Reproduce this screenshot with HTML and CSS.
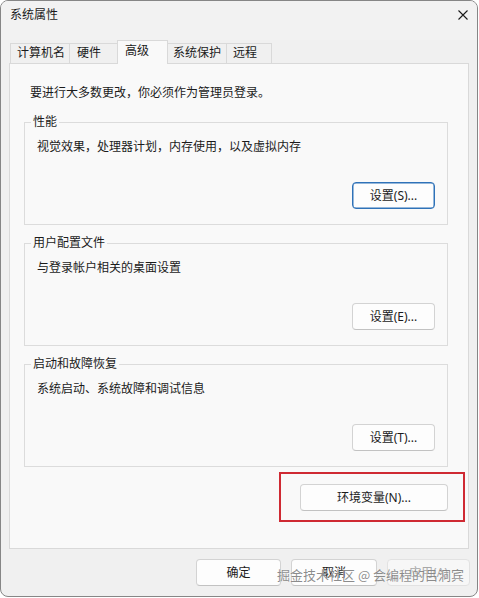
FILE: index.html
```html
<!DOCTYPE html>
<html lang="zh-CN">
<head>
<meta charset="utf-8">
<title>系统属性</title>
<link rel="stylesheet" href="styles.css">
</head>
<body>
<div class="window">
  <div class="titlebar">
    <span class="title">系统属性</span>
    <span class="close" aria-label="关闭">
      <svg width="10" height="10" viewBox="0 0 10 10"><path d="M0.5 0.5 L9.5 9.5 M9.5 0.5 L0.5 9.5" stroke="#1a1a1a" stroke-width="1.1" fill="none"/></svg>
    </span>
  </div>
  <div class="tabs">
    <div class="tab">计算机名</div>
    <div class="tab">硬件</div>
    <div class="tab active">高级</div>
    <div class="tab">系统保护</div>
    <div class="tab">远程</div>
  </div>
  <div class="panel">
    <p class="intro">要进行大多数更改，你必须作为管理员登录。</p>
    <fieldset class="group">
      <legend>性能</legend>
      <p class="desc">视觉效果，处理器计划，内存使用，以及虚拟内存</p>
      <div class="actions"><button class="btn btn-set btn-default">设置(S)...</button></div>
    </fieldset>
    <fieldset class="group">
      <legend>用户配置文件</legend>
      <p class="desc">与登录帐户相关的桌面设置</p>
      <div class="actions"><button class="btn btn-set">设置(E)...</button></div>
    </fieldset>
    <fieldset class="group">
      <legend>启动和故障恢复</legend>
      <p class="desc">系统启动、系统故障和调试信息</p>
      <div class="actions"><button class="btn btn-set">设置(T)...</button></div>
    </fieldset>
    <div class="env-row">
      <div class="highlight"><button class="btn btn-env">环境变量(N)...</button></div>
    </div>
  </div>
  <div class="footer">
    <button class="btn btn-ok">确定</button>
    <button class="btn btn-cancel">取消</button>
    <button class="btn btn-apply" disabled>应用(A)</button>
  </div>
  <div class="watermark">掘金技术社区 @ 会编程的吕洞宾</div>
</div>
</body>
</html>
```
FILE: styles.css
```css
* { box-sizing: border-box; }
html, body { margin: 0; padding: 0; background: #ffffff; }
body {
  font-family: "Segoe UI", "Noto Sans", "Noto Sans CJK SC", sans-serif;
  font-size: 12px;
  color: #1b1b1b;
}
.window {
  position: relative;
  width: 478px;
  height: 597px;
  border: 1px solid #868686;
  border-radius: 8px;
  background: #f0f0f0;
  display: flex;
  flex-direction: column;
  overflow: hidden;
}
.titlebar {
  height: 39px;
  flex: none;
  display: flex;
  justify-content: space-between;
  align-items: flex-start;
  background: #f2f2f2;
}
.title {
  padding: 6px 0 0 9px;
  line-height: 16px;
  font-size: 12px;
}
.close {
  display: block;
  margin: 9px 9px 0 0;
  width: 10px;
  height: 10px;
}
.close svg { display: block; }
.tabs {
  height: 23px;
  flex: none;
  display: flex;
  align-items: flex-end;
  padding-left: 9px;
  position: relative;
  z-index: 1;
}
.tab {
  height: 20px;
  border: 1px solid #d9d9d9;
  border-bottom: none;
  background: #f0f0f0;
  padding: 1px 0 0 6px;
  line-height: 16px;
  white-space: nowrap;
}
.tab + .tab { margin-left: -1px; }
.tab:nth-child(1) { width: 60px; }
.tab:nth-child(2) { width: 49px; padding-left: 7px; }
.tab:nth-child(3) { width: 51px; padding-left: 7px; }
.tab:nth-child(4) { width: 60px; padding-left: 5px; }
.tab:nth-child(5) { width: 46px; padding-left: 6px; }
.tab.active {
  height: 24px;
  margin-bottom: -1px;
  background: #f9f9f9;
  padding-top: 2px;
  position: relative;
  z-index: 2;
}
.panel {
  flex: 1;
  margin: 0 8px;
  border: 1px solid #d9d9d9;
  background: #f9f9f9;
  padding: 21px 3px 0 14px;
  display: flex;
  flex-direction: column;
}
.intro {
  margin: 0 0 13px 0;
  padding-left: 6px;
  line-height: 16px;
}
.group {
  margin: 0 17px 0 0;
  border: 1px solid #dcdcdc;
  padding: 9px 12px 15px 12px;
  min-width: 0;
}
.group + .group { margin-top: 10px; }
.group legend {
  margin-left: -6px;
  padding: 0 2px;
  line-height: 16px;
}
.desc {
  margin: 0;
  line-height: 16px;
}
.actions {
  margin-top: 27px;
  display: flex;
  justify-content: flex-end;
}
.btn {
  font: inherit;
  color: #1b1b1b;
  height: 27px;
  border: 1px solid #d3d3d3;
  border-bottom-color: #c2c2c2;
  border-radius: 4px;
  background: #fdfdfd;
  padding: 0;
  line-height: 16px;
  display: flex;
  align-items: center;
  justify-content: center;
}
.btn-default {
  border-color: #2f72b8;
  box-shadow: inset 0 0 0 0.5px #2f72b8;
}
.btn-set { width: 83px; }
.env-row {
  margin-top: 5px;
  display: flex;
  justify-content: flex-end;
}
.highlight {
  border: 2px solid #cf2a33;
  padding: 10px 15px 9px 19px;
}
.btn-env { width: 148px; }
.footer {
  height: 47px;
  flex: none;
  display: flex;
  justify-content: flex-end;
  align-items: flex-start;
  gap: 10px;
  padding: 10px 7px 0 0;
}
.btn-ok { width: 85px; }
.btn-cancel { width: 86px; }
.btn-apply { width: 83px; color: #a8a8a8; border-color: #e2e2e2; background: #f7f7f7; }
.watermark {
  position: absolute;
  left: 276px;
  top: 566px;
  font-family: "Noto Sans CJK SC", sans-serif;
  font-size: 13px;
  line-height: 16px;
  color: rgba(95, 95, 95, 0.72);
  text-shadow: 0 0 1px #ffffff;
  white-space: nowrap;
  pointer-events: none;
}
```
